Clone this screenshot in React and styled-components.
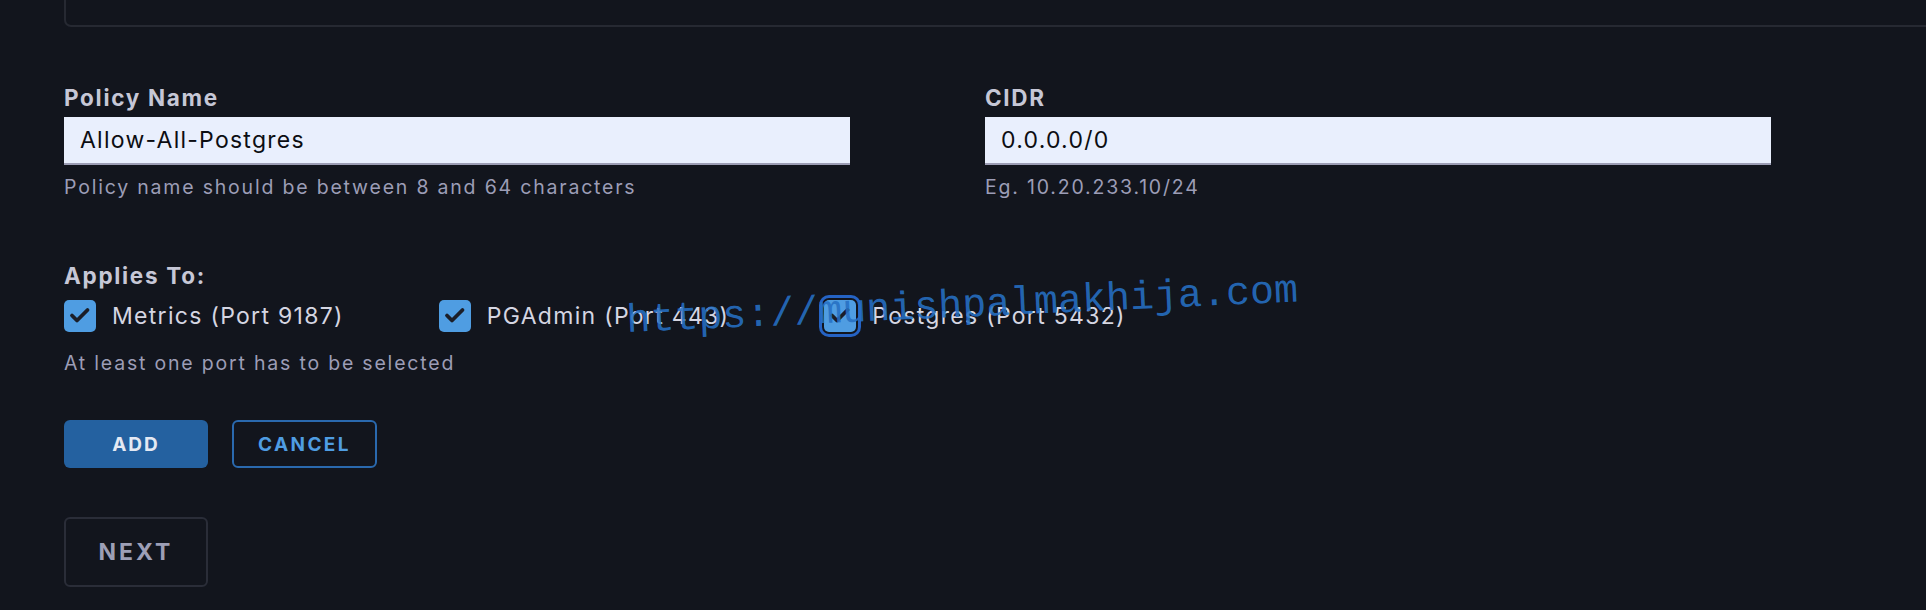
import React from "react";
import styled, { createGlobalStyle } from "styled-components";

const Global = createGlobalStyle`
  html, body {
    margin: 0;
    padding: 0;
    background: #12151d;
    overflow: hidden;
  }
  body {
    font-family: Inter, "Noto Sans", sans-serif;
    color: #c9cad8;
  }
`;

const Page = styled.div`
  position: relative;
  width: 1926px;
  height: 610px;
  padding-left: 64px;
  box-sizing: border-box;
  background: #12151d;
`;

const TopCard = styled.div`
  height: 25px;
  margin-right: -40px;
  border: 2px solid #262932;
  border-top: none;
  border-radius: 0 0 7px 7px;
`;

const FieldsGrid = styled.div`
  display: grid;
  grid-template-columns: 921px 786px;
  margin-top: 57px;
`;

const Field = styled.div`
  display: flex;
  flex-direction: column;
`;

const Label = styled.div`
  font-size: 22.5px;
  line-height: 28px;
  font-weight: 700;
  color: #c6c7d6;
  letter-spacing: 1.7px;
`;

const Input = styled.input`
  margin-top: 5px;
  width: 786px;
  height: 48px;
  box-sizing: border-box;
  border: none;
  border-bottom: 2px solid #9c9db4;
  background: #e9effd;
  padding: 0 14px 0 16px;
  font-family: Inter, "Noto Sans", sans-serif;
  font-size: 23px;
  letter-spacing: 1.25px;
  color: #0c0d12;
  outline: none;
`;

const Helper = styled.div`
  margin-top: ${(p) => p.$mt || 10}px;
  font-size: 19.5px;
  line-height: 24px;
  letter-spacing: 1.8px;
  color: #9c9db6;
`;

const Section = styled.div`
  margin-top: 63px;
  display: flex;
  flex-direction: column;
`;

const CheckRow = styled.div`
  display: flex;
  align-items: center;
  gap: 95px;
  margin-top: 10px;
`;

const CheckItem = styled.label`
  display: flex;
  align-items: center;
  gap: 16px;
  font-size: 23px;
  letter-spacing: 1.3px;
  color: #d5d6e2;
`;

const Box = styled.span`
  width: 32px;
  height: 32px;
  border-radius: 5px;
  background: #4f9de2;
  display: flex;
  align-items: center;
  justify-content: center;
  box-shadow: ${(p) =>
    p.$focused ? "0 0 0 2px #12151d, 0 0 0 5px #2563c4" : "none"};
`;

const ButtonRow = styled.div`
  display: flex;
  gap: 24px;
  margin-top: 45px;
`;

const Button = styled.button`
  box-sizing: border-box;
  width: ${(p) => p.$w}px;
  height: ${(p) => p.$h}px;
  border-radius: 6px;
  font-family: Inter, "Noto Sans", sans-serif;
  font-weight: 700;
  font-size: ${(p) => p.$fs}px;
  letter-spacing: ${(p) => p.$ls}px;
  text-transform: uppercase;
  cursor: pointer;
  padding: 0;
  background: ${(p) => p.$bg};
  color: ${(p) => p.$color};
  border: ${(p) => p.$border};
`;

const NextWrap = styled.div`
  margin-top: 49px;
`;

const Watermark = styled.div`
  position: absolute;
  left: 627px;
  top: 302px;
  font-family: "Liberation Mono", "DejaVu Sans Mono", monospace;
  font-size: 40px;
  line-height: 40px;
  color: rgba(38, 112, 196, 0.9);
  white-space: nowrap;
  transform-origin: 0 31px;
  transform: rotate(-2.6deg);
  pointer-events: none;
`;

const Check = () => (
  <svg width="32" height="32" viewBox="0 0 32 32">
    <path
      d="M8 15.5 L13 20.5 L23.5 10"
      fill="none"
      stroke="#1b1e28"
      strokeWidth="3.8"
      strokeLinecap="round"
      strokeLinejoin="round"
    />
  </svg>
);

const ports = [
  { label: "Metrics (Port 9187)" },
  { label: "PGAdmin (Port 443)" },
  { label: "Postgres (Port 5432)", focused: true },
];

export default function App() {
  return (
    <Page>
      <Global />
      <TopCard />
      <FieldsGrid>
        <Field>
          <Label>Policy Name</Label>
          <Input defaultValue="Allow-All-Postgres" />
          <Helper>Policy name should be between 8 and 64 characters</Helper>
        </Field>
        <Field>
          <Label>CIDR</Label>
          <Input defaultValue="0.0.0.0/0" />
          <Helper>Eg. 10.20.233.10/24</Helper>
        </Field>
      </FieldsGrid>
      <Section>
        <Label>Applies To:</Label>
        <CheckRow>
          {ports.map((p) => (
            <CheckItem key={p.label}>
              <Box $focused={p.focused}>
                <Check />
              </Box>
              {p.label}
            </CheckItem>
          ))}
        </CheckRow>
        <Helper $mt={19}>At least one port has to be selected</Helper>
      </Section>
      <ButtonRow>
        <Button $w={144} $h={48} $fs={19} $ls={2} $bg="#2461a0" $color="#e4e9f3" $border="none">
          Add
        </Button>
        <Button
          $w={145}
          $h={48}
          $fs={19}
          $ls={2.4}
          $bg="transparent"
          $color="#4f9de2"
          $border="2px solid #2a69ae"
        >
          Cancel
        </Button>
      </ButtonRow>
      <NextWrap>
        <Button
          $w={144}
          $h={70}
          $fs={23}
          $ls={3}
          $bg="transparent"
          $color="#9d9fb6"
          $border="2px solid #2a2d38"
        >
          Next
        </Button>
      </NextWrap>
      <Watermark>https://munishpalmakhija.com</Watermark>
    </Page>
  );
}
